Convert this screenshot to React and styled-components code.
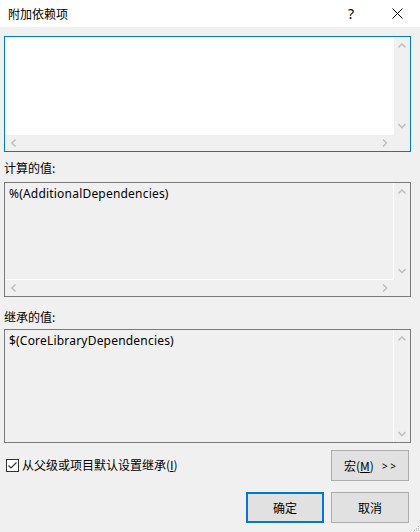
import React from "react"
import styled, { createGlobalStyle } from "styled-components"

const Global = createGlobalStyle`
  html, body {
    margin: 0;
    padding: 0;
    background: #f0f0f0;
  }
  body {
    font-family: "Noto Sans", "Noto Sans CJK SC", sans-serif;
    font-size: 12px;
    color: #000;
  }
`

const Window = styled.div`
  position: relative;
  width: 420px;
  height: 532px;
  overflow: hidden;
  display: flex;
  flex-direction: column;
  background: #f0f0f0;
`

const TitleBar = styled.div`
  height: 27px;
  background: #fff;
  display: flex;
  align-items: center;
`

const Title = styled.div`
  flex: 1;
  padding-left: 8px;
  font-family: "Noto Sans CJK SC", sans-serif;
  font-size: 12px;
`

const TitleButton = styled.div`
  width: 46px;
  height: 27px;
  display: flex;
  align-items: center;
  justify-content: center;
  font-size: 14px;
`

const Body = styled.div`
  display: flex;
  flex-direction: column;
  padding: 9px 9px 0 4px;
`

const Box = styled.div`
  box-sizing: border-box;
  height: ${p => p.h}px;
  border: 1px solid ${p => (p.focused ? "#0078d7" : "#7a7a7a")};
  background: ${p => (p.readOnly ? "#f0f0f0" : "#fff")};
  display: grid;
  grid-template-columns: 1fr 17px;
  grid-template-rows: ${p => (p.hasH ? "1fr 17px" : "1fr")};
`

const Content = styled.div`
  padding: 3px 4px;
  line-height: 16px;
  letter-spacing: 0.2px;
  white-space: nowrap;
  overflow: hidden;
`

const VScroll = styled.div`
  background: #f0f0f0;
  border-left: 1px solid #fff;
  display: flex;
  flex-direction: column;
  justify-content: space-between;
`

const HScroll = styled.div`
  background: #f0f0f0;
  border-top: 1px solid #fff;
  display: flex;
  justify-content: space-between;
`

const Corner = styled.div`
  background: #f0f0f0;
`

const ArrowBtn = styled.div`
  width: ${p => (p.horizontal ? "17px" : "auto")};
  height: ${p => (p.horizontal ? "auto" : "17px")};
  display: flex;
  align-items: center;
  justify-content: center;
`

const Label = styled.div`
  padding: ${p => p.pad};
  line-height: 16px;
  font-family: "Noto Sans CJK SC", sans-serif;
`

const BottomRow = styled.div`
  display: flex;
  justify-content: space-between;
  align-items: flex-start;
  margin-top: 7px;
  padding-right: 2px;
`

const CheckLabel = styled.label`
  display: flex;
  align-items: center;
  margin: 7px 0 0 2px;
  font-family: "Noto Sans CJK SC", sans-serif;
  line-height: 16px;
`

const CheckBox = styled.span`
  box-sizing: border-box;
  width: 13px;
  height: 13px;
  border: 1px solid #333;
  background: #fff;
  margin-right: 3px;
  display: flex;
`

const Button = styled.div`
  box-sizing: border-box;
  width: 78px;
  height: 31px;
  border: ${p => (p.primary ? "2px solid #0078d7" : "1px solid #adadad")};
  background: #e1e1e1;
  display: flex;
  align-items: center;
  justify-content: center;
  font-family: "Noto Sans CJK SC", sans-serif;
`

const Arrows = styled.span`
  font-family: "Noto Sans", sans-serif;
  font-size: 10px;
  margin-left: 8px;
`

const ButtonRow = styled.div`
  display: flex;
  justify-content: flex-end;
  gap: 7px;
  margin-top: 11px;
  padding-right: 2px;
`

const Grip = styled.svg`
  position: absolute;
  right: 0;
  bottom: 0;
`

const U = styled.span`
  text-decoration: underline;
`

const Chevron = ({ dir }) => {
  const pts = {
    up: "0.5,4.5 4,1 7.5,4.5",
    down: "0.5,1 4,4.5 7.5,1",
    left: "4.5,0.5 1,4 4.5,7.5",
    right: "1,0.5 4.5,4 1,7.5",
  }[dir]
  const vert = dir === "up" || dir === "down"
  return (
    <svg width={vert ? 8 : 6} height={vert ? 6 : 8}>
      <polyline points={pts} fill="none" stroke="#c2c2c2" strokeWidth="1.6" />
    </svg>
  )
}

const ScrollBox = ({ h, focused, readOnly, hasH, children }) => (
  <Box h={h} focused={focused} readOnly={readOnly} hasH={hasH}>
    <Content>{children}</Content>
    <VScroll>
      <ArrowBtn><Chevron dir="up" /></ArrowBtn>
      <ArrowBtn><Chevron dir="down" /></ArrowBtn>
    </VScroll>
    {hasH && (
      <>
        <HScroll>
          <ArrowBtn horizontal><Chevron dir="left" /></ArrowBtn>
          <ArrowBtn horizontal><Chevron dir="right" /></ArrowBtn>
        </HScroll>
        <Corner />
      </>
    )}
  </Box>
)

export default function App() {
  return (
    <Window>
      <Global />
      <TitleBar>
        <Title>附加依赖项</Title>
        <TitleButton>?</TitleButton>
        <TitleButton>
          <svg width="11" height="11">
            <path d="M0.5 0.5 L10.5 10.5 M10.5 0.5 L0.5 10.5" stroke="#000" strokeWidth="1" />
          </svg>
        </TitleButton>
      </TitleBar>
      <Body>
        <ScrollBox h={116} focused hasH />
        <Label pad="8px 0 6px">计算的值:</Label>
        <ScrollBox h={115} readOnly hasH>%(AdditionalDependencies)</ScrollBox>
        <Label pad="12px 0 4px">继承的值:</Label>
        <ScrollBox h={114} readOnly>$(CoreLibraryDependencies)</ScrollBox>
        <BottomRow>
          <CheckLabel>
            <CheckBox>
              <svg width="11" height="11">
                <polyline points="1.5,5.5 4,8 9.5,2.5" fill="none" stroke="#333" strokeWidth="1.2" />
              </svg>
            </CheckBox>
            从父级或项目默认设置继承(<U>I</U>)
          </CheckLabel>
          <Button>宏(<U>M</U>)<Arrows>&gt; &gt;</Arrows></Button>
        </BottomRow>
        <ButtonRow>
          <Button primary>确定</Button>
          <Button>取消</Button>
        </ButtonRow>
      </Body>
      <Grip width="8" height="8">
        <rect x="6" y="2" width="1" height="1" fill="#b0b0b0" />
        <rect x="4" y="4" width="1" height="1" fill="#b0b0b0" />
        <rect x="6" y="4" width="1" height="1" fill="#b0b0b0" />
        <rect x="2" y="6" width="1" height="1" fill="#b0b0b0" />
        <rect x="4" y="6" width="1" height="1" fill="#b0b0b0" />
        <rect x="6" y="6" width="1" height="1" fill="#b0b0b0" />
      </Grip>
    </Window>
  )
}
